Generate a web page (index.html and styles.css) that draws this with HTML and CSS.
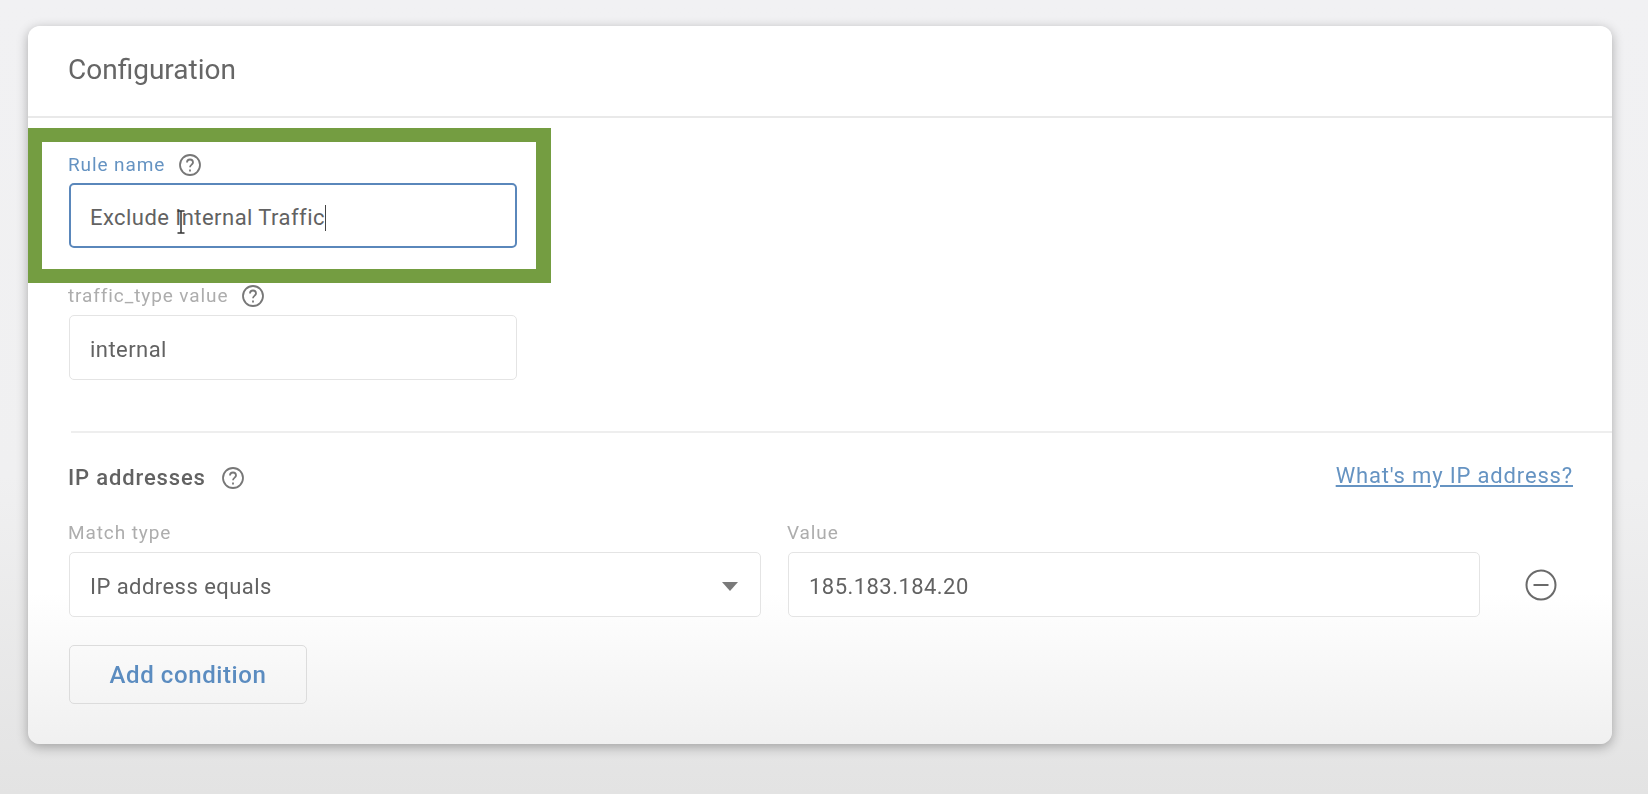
FILE: index.html
```html
<!DOCTYPE html>
<html lang="en">
<head>
<meta charset="utf-8">
<title>Configuration</title>
<link rel="stylesheet" href="styles.css">
</head>
<body>
<main class="card">
  <header class="card-header"><h1 class="card-title">Configuration</h1></header>

  <section class="highlight">
    <div class="label-row">
      <label class="label label-active">Rule name</label>
      <svg class="help" viewBox="0 0 24 24"><circle cx="12" cy="12" r="10"/><path d="M9 9.5a3 3 0 0 1 6 0c0 2-3 2.300-3 4.800"/><path d="M12 16.600v1.800"/></svg>
    </div>
    <div class="input input-focus">
      <span class="typed">Exclude Internal Traffic<span class="caret"></span></span>
      <svg class="ibeam" viewBox="0 0 10 24"><path d="M1.500 1h7M5 1v22M1.500 23h7"/></svg>
    </div>
  </section>

  <section class="traffic">
    <div class="label-row">
      <label class="label">traffic_type value</label>
      <svg class="help" viewBox="0 0 24 24"><circle cx="12" cy="12" r="10"/><path d="M9 9.5a3 3 0 0 1 6 0c0 2-3 2.300-3 4.800"/><path d="M12 16.600v1.800"/></svg>
    </div>
    <div class="input">internal</div>
  </section>

  <section class="ip">
    <div class="ip-head">
      <div class="ip-title">
        <h2 class="section-title">IP addresses</h2>
        <svg class="help" viewBox="0 0 24 24"><circle cx="12" cy="12" r="10"/><path d="M9 9.5a3 3 0 0 1 6 0c0 2-3 2.300-3 4.800"/><path d="M12 16.600v1.800"/></svg>
      </div>
      <a class="link" href="#">What's my IP address?</a>
    </div>

    <div class="condition">
      <div class="col">
        <label class="label">Match type</label>
        <div class="input select">IP address equals<span class="arrow"></span></div>
      </div>
      <div class="col">
        <label class="label">Value</label>
        <div class="input">185.183.184.20</div>
      </div>
      <svg class="remove" viewBox="0 0 32 32"><circle cx="16" cy="16" r="14.500"/><path d="M8.500 16h15"/></svg>
    </div>

    <button class="add" type="button">Add condition</button>
  </section>
</main>
</body>
</html>
```

FILE: styles.css
```css
* { box-sizing: border-box; }

html, body { height: 100%; }

body {
  margin: 0;
  padding: 26px 36px 0 28px;
  overflow: hidden;
  font-family: Roboto, "Liberation Sans", sans-serif;
  color: #5a5a5a;
  background: linear-gradient(180deg, #f1f1f3 0%, #f0f0f1 60%, #e3e3e3 100%);
}

.card {
  height: 718px;
  border-radius: 12px;
  background: linear-gradient(180deg, #fff 0%, #fff 79%, #f0f0f0 100%);
  box-shadow: 0 3px 12px rgba(0, 0, 0, .3);
  filter: blur(.5px);
}

.card-header {
  height: 92px;
  padding: 28px 40px 0;
  border-bottom: 2px solid #e9e9e9;
}

.card-title {
  margin: 0;
  font-size: 28px;
  line-height: 32px;
  font-weight: 400;
  color: #666;
}

.highlight {
  width: 523px;
  height: 155px;
  margin-top: 10px;
  padding: 10px 26px 0;
  border: 14px solid #749d41;
  border-right-width: 15px;
  background: #fff;
}

.label-row {
  display: flex;
  align-items: center;
  gap: 13px;
  height: 26px;
  margin-bottom: 5px;
}

.label {
  display: block;
  font-size: 19px;
  line-height: 26px;
  letter-spacing: .9px;
  color: #adadad;
}

.label-active { color: #6593c2; }

.help {
  width: 24px;
  height: 24px;
  flex: none;
  fill: none;
  stroke: #777;
  stroke-width: 1.800;
}

.input {
  display: flex;
  align-items: center;
  height: 65px;
  padding: 3px 20px 0;
  border: 1px solid #e4e4e4;
  border-radius: 5px;
  background: #fff;
  font-size: 22px;
  letter-spacing: .45px;
  color: #626262;
}

.input-focus {
  position: relative;
  width: 448px;
  margin-left: 1px;
  padding: 4px 19px 0;
  border: 2.500px solid #5a87bb;
}

.typed { display: inline-flex; align-items: center; white-space: pre; }

.caret {
  display: inline-block;
  width: 1.500px;
  height: 26px;
  background: #444;
}

.ibeam {
  position: absolute;
  left: 105px;
  top: 25px;
  width: 10px;
  height: 24px;
  fill: none;
  stroke: #333;
  stroke-width: 1.500;
}

.traffic {
  width: 448px;
  margin-left: 41px;
}

.traffic .label-row { margin: 0 0 6px -1px; }

.ip {
  margin: 51px 0 0 43px;
  padding-top: 27px;
  border-top: 2px solid #eee;
}

.ip-head {
  display: flex;
  align-items: center;
  justify-content: space-between;
  height: 36px;
  margin-left: -3px;
  padding-right: 39px;
}

.ip-title { display: flex; align-items: center; gap: 15px; }

.section-title {
  margin: 0;
  font-size: 22px;
  line-height: 28px;
  font-weight: 500;
  letter-spacing: .85px;
  color: #626262;
}

.link {
  margin-bottom: 6px;
  font-size: 22px;
  letter-spacing: .83px;
  color: #6593c2;
  text-decoration: underline;
}

.condition {
  display: flex;
  align-items: flex-end;
  gap: 27px;
  margin: 24px 0 0 -2px;
}

.col { flex: 0 0 692px; }

.col .label { margin: 0 0 6px -1px; }

.select { justify-content: space-between; padding-right: 22px; }

.arrow {
  width: 0;
  height: 0;
  border-left: 8px solid transparent;
  border-right: 8px solid transparent;
  border-top: 9px solid #7a7a7a;
}

.remove {
  width: 32px;
  height: 32px;
  margin: 0 0 16px 18px;
  flex: none;
  fill: none;
  stroke: #6a6a6a;
  stroke-width: 2;
}

.add {
  display: block;
  width: 238px;
  height: 59px;
  margin: 28px 0 0 -2px;
  padding-top: 2px;
  border: 1px solid #dcdcdc;
  border-radius: 5px;
  background: transparent;
  font-family: inherit;
  font-size: 24px;
  font-weight: 500;
  letter-spacing: .6px;
  color: #5b8cc0;
}
```
